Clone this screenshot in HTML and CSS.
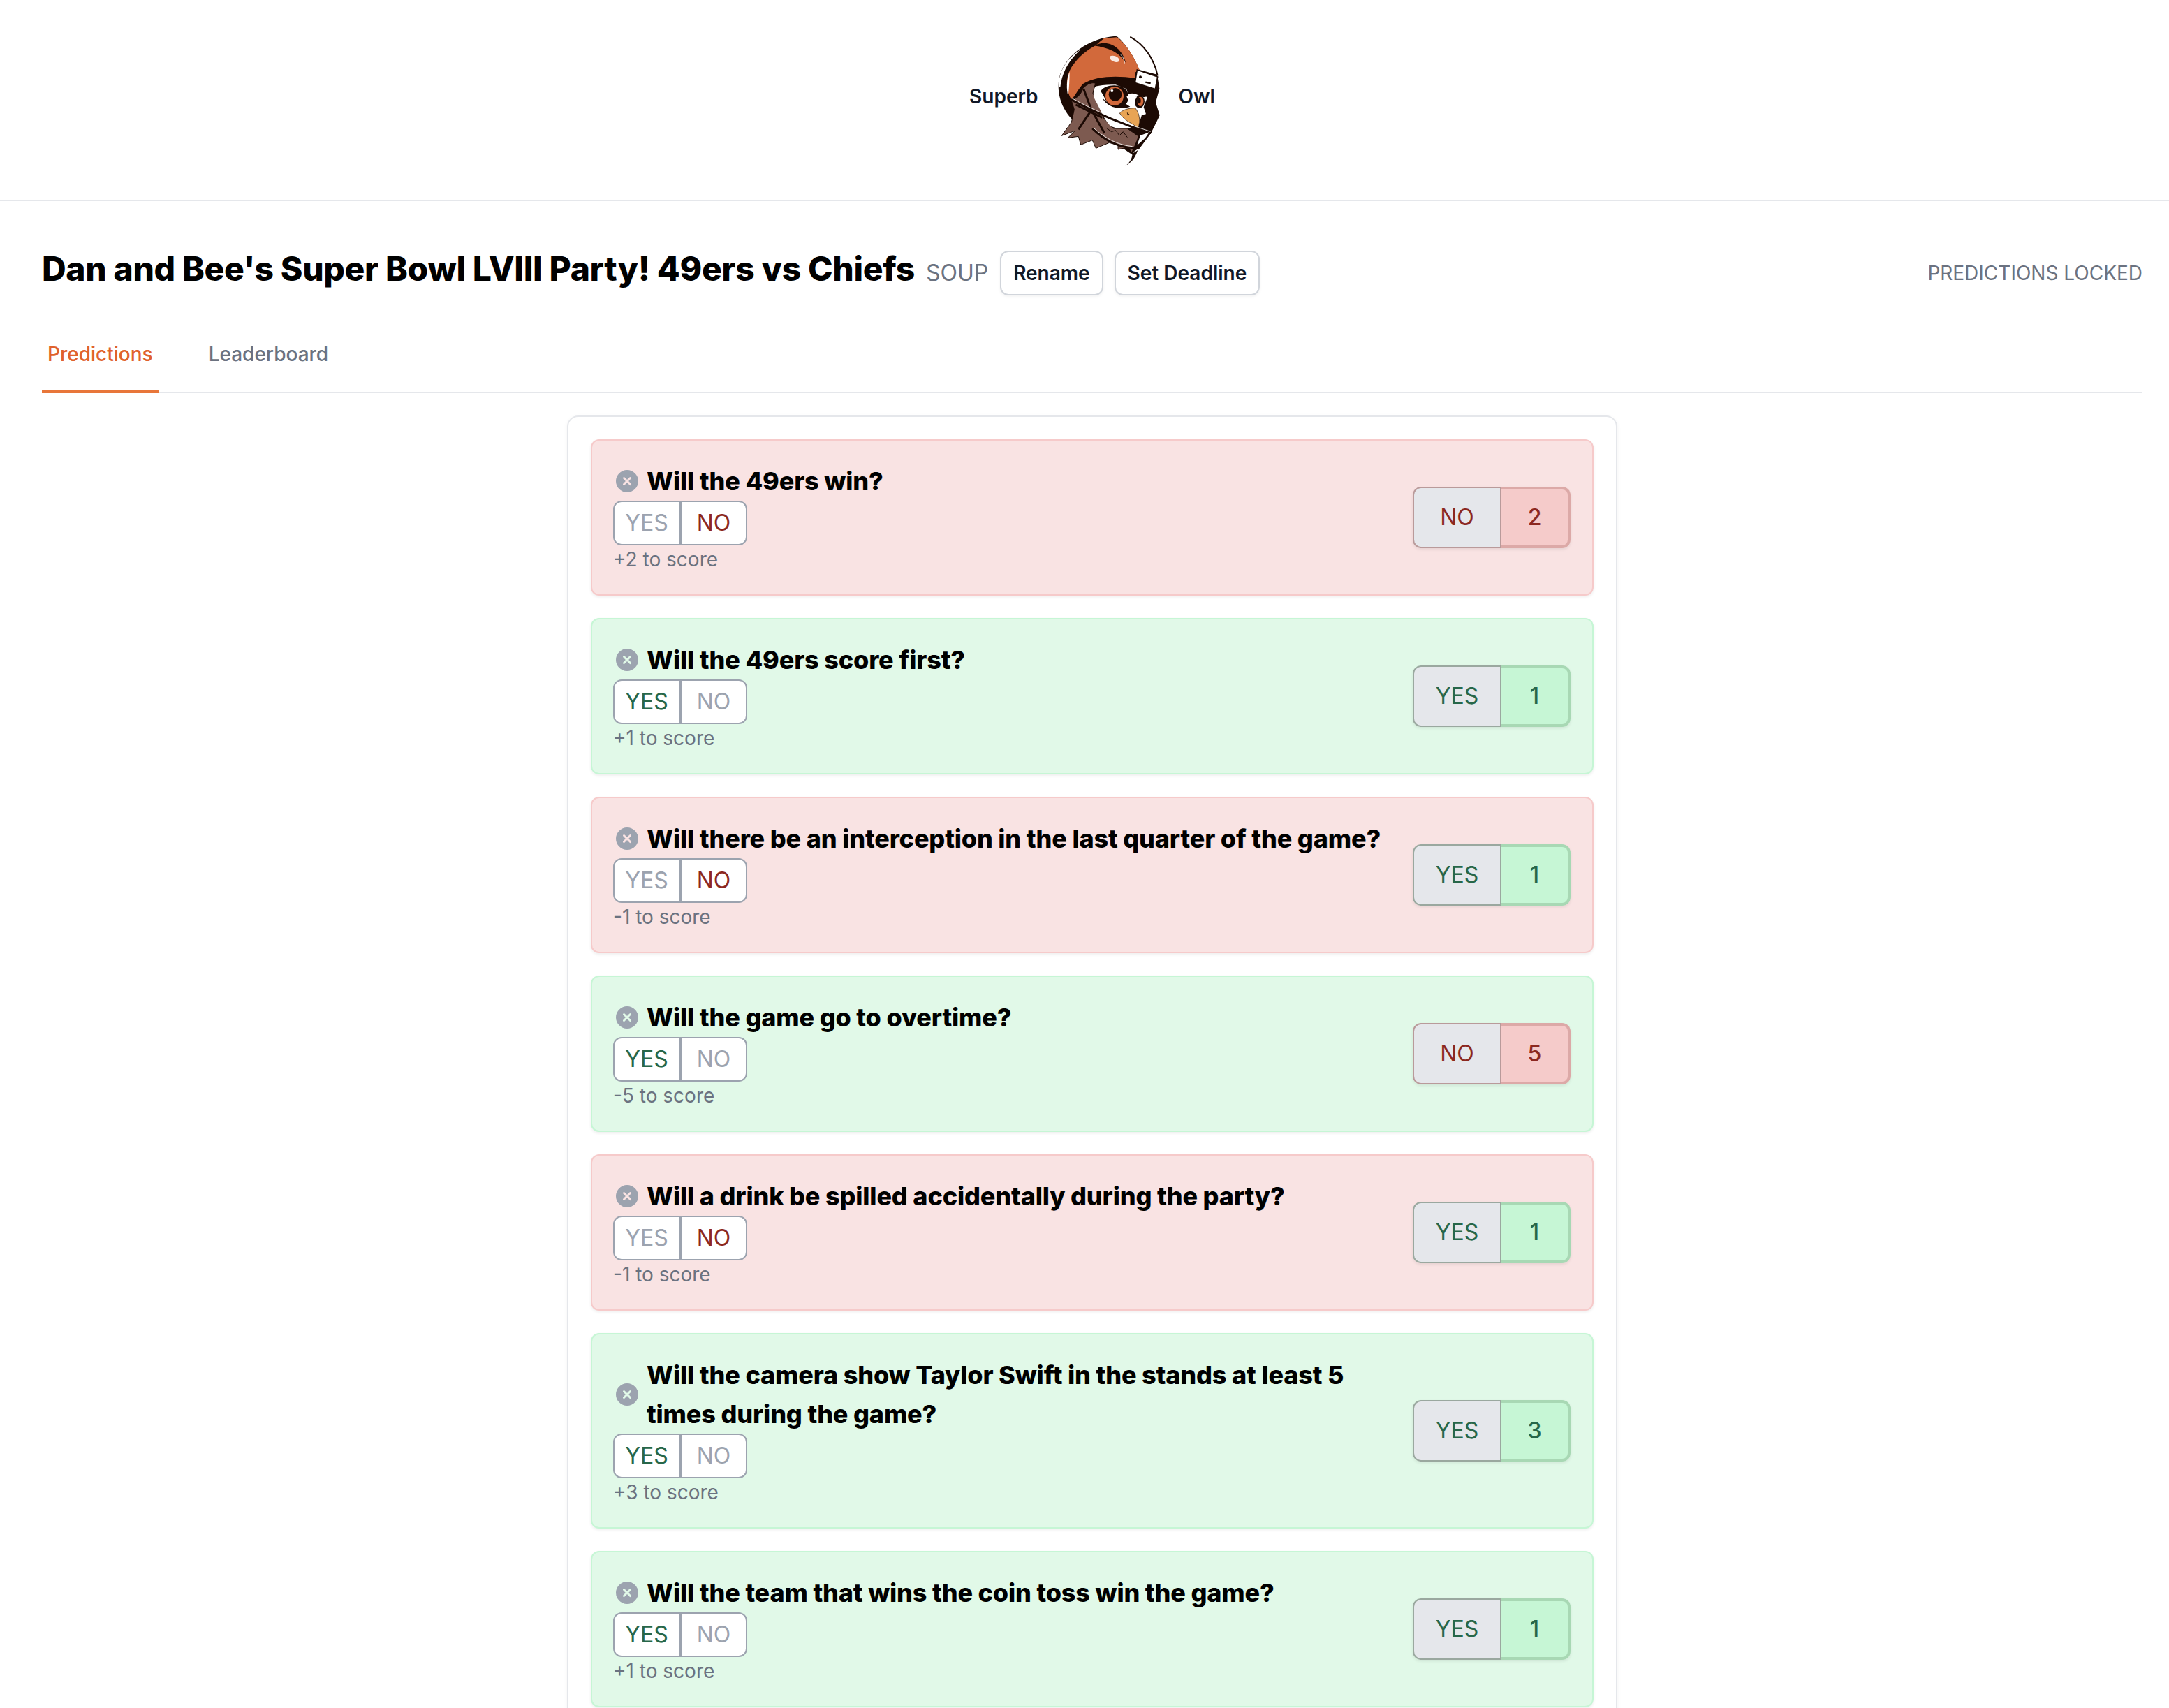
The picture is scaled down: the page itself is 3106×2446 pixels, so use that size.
FILE: index.html
```html
<!DOCTYPE html>
<html lang="en">
<head>
<meta charset="utf-8">
<title>Superb Owl</title>
<link rel="stylesheet" href="styles.css">
</head>
<body>
<svg class="defs" width="0" height="0" aria-hidden="true">
  <symbol id="x-circle" viewBox="2 2 16 16">
    <path fill-rule="evenodd" d="M10 18a8 8 0 100-16 8 8 0 000 16zM8.28 7.22a.75.75 0 00-1.06 1.06L8.94 10l-1.72 1.72a.75.75 0 101.06 1.06L10 11.06l1.72 1.72a.75.75 0 101.06-1.06L11.06 10l1.72-1.72a.75.75 0 00-1.06-1.06L10 8.94 8.28 7.22z"/>
  </symbol>
</svg>
<header class="site-header">
  <span class="brand">Superb</span>
  <svg class="logo" viewBox="0 0 540 630" width="180" height="210" aria-label="Owl in a football helmet">
    <path fill="#1c0a04" d="M290 35C190 40 75 105 47 215C35 285 60 350 105 395L190 430L355 540L385 520L445 445L465 405L479 375L462 320L478 260L468 200L392 180C370 125 335 70 298 38Z"/>
    <path fill="none" stroke="#1c0a04" stroke-width="6" d="M352 38C410 70 455 130 470 205"/>
    <path fill="#fff" d="M45 255C42 190 80 130 140 92C92 135 58 190 52 255Z"/>
    <path fill="#d2693b" d="M240 44L296 40C335 70 370 125 392 180L372 192L372 216C300 204 205 205 150 240C132 258 118 288 100 308C76 268 72 212 102 166C130 122 172 92 205 74C218 62 230 52 240 44Z"/>
    <path fill="#1c0a04" d="M198 76C250 48 314 76 334 150C302 102 258 86 198 76Z"/>
    <path fill="#fff" d="M92 188C79 222 77 260 86 294C90 256 92 222 92 188Z"/>
    <ellipse cx="285" cy="133" rx="22" ry="12" fill="#fff" fill-opacity=".85" transform="rotate(22 285 133)"/>
    <path fill="none" stroke="#fff" stroke-width="2.5" d="M312 115C322 125 328 138 328 152"/>
    <path fill="#7d5a50" stroke="#1c0a04" stroke-width="3" d="M150 258C168 240 190 232 203 238L192 280L220 340L240 390L280 432L340 432L388 465L362 544L345 512L300 522L300 503L262 493L205 517L190 482L140 502L130 466L85 472L115 442L58 463L100 405L112 350L100 312C122 300 140 290 150 258Z"/>
    <path fill="#fff" d="M212 240C194 258 188 285 203 312C225 350 238 392 268 422L298 432L384 432L402 374L420 370L410 340L426 298L380 270L300 240Z"/>
    <path fill="#1c0a04" d="M196 252C230 214 310 212 376 232L436 292L410 298L378 285L344 282L336 262L290 244C255 242 226 246 196 252Z"/>
    <path fill="#1c0a04" d="M226 272C240 240 320 236 340 272C348 295 346 315 334 326L352 338C310 352 255 345 232 300C240 308 246 314 252 318C242 302 238 288 226 272Z"/>
    <ellipse cx="392" cy="316" rx="22" ry="28" fill="#1c0a04"/>
    <path fill="#fff" d="M336 292L352 296L360 280L370 296L382 294L374 310L372 328L358 322L346 328L344 312Z"/>
    <ellipse cx="285" cy="293" rx="39" ry="40" fill="#d2693b"/>
    <circle cx="288" cy="286" r="28" fill="#1c0a04"/>
    <circle cx="274" cy="270" r="6" fill="#fff"/>
    <ellipse cx="396" cy="316" rx="13" ry="20" fill="#d2693b"/>
    <ellipse cx="390" cy="312" rx="8" ry="13" fill="#1c0a04"/>
    <path fill="#e8a455" stroke="#1c0a04" stroke-width="2" d="M307 366C322 350 345 345 374 344C392 366 398 398 386 432C368 410 330 404 307 366Z"/>
    <path fill="#1c0a04" d="M338 362L352 374L342 376Z"/>
    <path fill="none" stroke="#1c0a04" stroke-width="9" d="M98 308C180 352 310 412 442 452M118 330C150 345 190 365 232 385M190 432C240 482 300 512 368 516M152 262L186 352L242 452M186 352L130 436M445 440L385 520M400 455L360 540"/>
    <path fill="none" stroke="#fff" stroke-width="2.5" d="M100 301C180 345 310 405 440 445M198 432C248 476 300 503 362 509"/>
    <path fill="none" stroke="#1c0a04" stroke-width="3" d="M250 430L272 446L290 440L306 462L322 446L340 470"/>
    <path fill="#fff" d="M396 462L434 448L416 474L382 504Z"/>
    <path fill="#1c0a04" d="M362 540C360 565 348 580 332 593C352 580 372 565 385 525Z"/>
    <path fill="#fff" stroke="#1c0a04" stroke-width="5" d="M382 180L470 210L460 263L373 236Z"/>
    <circle cx="396" cy="211" r="6" fill="#1c0a04"/>
    <path fill="none" stroke="#1c0a04" stroke-width="7" d="M418 233L440 238"/>
  </svg>
  <span class="brand">Owl</span>
</header>

<main class="page">
  <div class="title-row">
    <div class="title-group">
      <h1 class="title">Dan and Bee's Super Bowl LVIII Party! 49ers vs Chiefs</h1>
      <span class="code">SOUP</span>
      <button class="btn">Rename</button>
      <button class="btn">Set Deadline</button>
    </div>
    <span class="locked">PREDICTIONS LOCKED</span>
  </div>

  <nav class="tabs">
    <a class="tab tab-active">Predictions</a>
    <a class="tab">Leaderboard</a>
  </nav>

  <section class="panel">
    <article class="card card-red">
      <div class="card-main">
        <div class="question"><svg class="remove"><use href="#x-circle"/></svg><h2 class="q-text">Will the 49ers win?</h2></div>
        <div class="toggle"><span class="opt">YES</span><span class="opt opt-on">NO</span></div>
        <div class="score">+2 to score</div>
      </div>
      <div class="pill pill-red"><span class="pill-answer">NO</span><span class="pill-count">2</span></div>
    </article>

    <article class="card card-green">
      <div class="card-main">
        <div class="question"><svg class="remove"><use href="#x-circle"/></svg><h2 class="q-text">Will the 49ers score first?</h2></div>
        <div class="toggle"><span class="opt opt-on">YES</span><span class="opt">NO</span></div>
        <div class="score">+1 to score</div>
      </div>
      <div class="pill pill-green"><span class="pill-answer">YES</span><span class="pill-count">1</span></div>
    </article>

    <article class="card card-red">
      <div class="card-main">
        <div class="question"><svg class="remove"><use href="#x-circle"/></svg><h2 class="q-text">Will there be an interception in the last quarter of the game?</h2></div>
        <div class="toggle"><span class="opt">YES</span><span class="opt opt-on">NO</span></div>
        <div class="score">-1 to score</div>
      </div>
      <div class="pill pill-green"><span class="pill-answer">YES</span><span class="pill-count">1</span></div>
    </article>

    <article class="card card-green">
      <div class="card-main">
        <div class="question"><svg class="remove"><use href="#x-circle"/></svg><h2 class="q-text">Will the game go to overtime?</h2></div>
        <div class="toggle"><span class="opt opt-on">YES</span><span class="opt">NO</span></div>
        <div class="score">-5 to score</div>
      </div>
      <div class="pill pill-red"><span class="pill-answer">NO</span><span class="pill-count">5</span></div>
    </article>

    <article class="card card-red">
      <div class="card-main">
        <div class="question"><svg class="remove"><use href="#x-circle"/></svg><h2 class="q-text">Will a drink be spilled accidentally during the party?</h2></div>
        <div class="toggle"><span class="opt">YES</span><span class="opt opt-on">NO</span></div>
        <div class="score">-1 to score</div>
      </div>
      <div class="pill pill-green"><span class="pill-answer">YES</span><span class="pill-count">1</span></div>
    </article>

    <article class="card card-green">
      <div class="card-main">
        <div class="question"><svg class="remove"><use href="#x-circle"/></svg><h2 class="q-text">Will the camera show Taylor Swift in the stands at least 5 times during the game?</h2></div>
        <div class="toggle"><span class="opt opt-on">YES</span><span class="opt">NO</span></div>
        <div class="score">+3 to score</div>
      </div>
      <div class="pill pill-green"><span class="pill-answer">YES</span><span class="pill-count">3</span></div>
    </article>

    <article class="card card-green">
      <div class="card-main">
        <div class="question"><svg class="remove"><use href="#x-circle"/></svg><h2 class="q-text">Will the team that wins the coin toss win the game?</h2></div>
        <div class="toggle"><span class="opt opt-on">YES</span><span class="opt">NO</span></div>
        <div class="score">+1 to score</div>
      </div>
      <div class="pill pill-green"><span class="pill-answer">YES</span><span class="pill-count">1</span></div>
    </article>
  </section>
</main>
</body>
</html>
```

FILE: styles.css
```css
* { box-sizing: border-box; }

html, body {
  margin: 0;
  padding: 0;
  height: 2446px;
  overflow: hidden;
  background: #fff;
  font-family: Inter, "Liberation Sans", sans-serif;
  color: #111827;
}

.defs { display: block; height: 0; }

.site-header {
  display: flex;
  justify-content: center;
  align-items: center;
  height: 288px;
  padding: 0 0 10px 22px;
  border-bottom: 2px solid #e5e7eb;
}

.brand {
  font-size: 28px;
  line-height: 40px;
  font-weight: 600;
  color: #111827;
}

.logo {
  flex: none;
  margin: 14px 7px 0 14px;
}

.page { padding: 71px 38px 0 60px; }

.title-row {
  display: flex;
  justify-content: space-between;
  align-items: center;
}

.title-group {
  display: flex;
  align-items: center;
}

.title {
  margin: 0 16px 12px 0;
  font-size: 48px;
  line-height: 52px;
  font-weight: 800;
  letter-spacing: -0.35px;
  color: #000;
}

.code {
  margin-right: 17px;
  font-size: 32px;
  line-height: 40px;
  color: #6b7280;
}

.btn {
  height: 64px;
  margin-right: 16px;
  padding: 0 17px;
  background: #fff;
  border: 2px solid #d1d5db;
  border-radius: 12px;
  box-shadow: 0 2px 4px rgba(0, 0, 0, .05);
  font: 600 28px/40px Inter, "Liberation Sans", sans-serif;
  color: #111827;
}

.locked {
  font-size: 28px;
  line-height: 40px;
  color: #6b7280;
}

.tabs {
  display: flex;
  gap: 64px;
  margin-top: 32px;
  border-bottom: 2px solid #e5e7eb;
}

.tab {
  margin-bottom: -2px;
  padding: 32px 8px 32px;
  border-bottom: 4px solid transparent;
  font-size: 28px;
  line-height: 40px;
  font-weight: 500;
  color: #6b7280;
}

.tab-active {
  color: #e0622c;
  border-bottom-color: #e8763a;
}

.panel {
  display: flex;
  flex-direction: column;
  gap: 32px;
  width: 1504px;
  margin: 32px auto 0;
  padding: 32px;
  background: #fff;
  border: 2px solid #e5e7eb;
  border-radius: 16px;
  box-shadow: 0 2px 6px rgba(0, 0, 0, .05);
}

.card {
  display: flex;
  align-items: center;
  gap: 32px;
  padding: 30px 31px 30px 30px;
  border: 2px solid;
  border-radius: 12px;
  box-shadow: 0 2px 4px rgba(0, 0, 0, .07);
}

.card-red { background: #f9e3e3; border-color: #f6caca; }
.card-green { background: #e1f9e8; border-color: #c6f6d5; }

.card-main { flex: 1; min-width: 0; }

.question {
  display: flex;
  align-items: center;
  gap: 12px;
  margin-left: 4px;
}

.remove {
  flex: none;
  width: 32px;
  height: 32px;
  fill: #9ca3af;
}

.q-text {
  margin: 0;
  font-size: 36px;
  line-height: 56px;
  font-weight: 800;
  letter-spacing: -0.16px;
  color: #000;
}

.toggle {
  display: flex;
  width: 192px;
  height: 64px;
  background: #fff;
  border: 2px solid #9ca3af;
  border-radius: 12px;
}

.opt {
  flex: 1;
  display: flex;
  align-items: center;
  justify-content: center;
  padding-bottom: 1px;
  font-size: 32px;
  color: #9ca3af;
}

.opt + .opt { border-left: 4px solid #9ca3af; }

.card-red .opt-on { color: #8c2820; }
.card-green .opt-on { color: #276749; }

.score {
  font-size: 28px;
  line-height: 40px;
  color: #6b7280;
}

.pill {
  flex: none;
  display: flex;
  height: 88px;
  font-size: 32px;
  border-radius: 12px;
  box-shadow: 0 2px 4px rgba(0, 0, 0, .08);
}

.pill-answer,
.pill-count {
  display: flex;
  align-items: center;
  justify-content: center;
  padding-bottom: 2px;
}

.pill-answer {
  width: 127px;
  background: #e5e7eb;
  border: 2px solid;
  border-radius: 12px 0 0 12px;
}

.pill-count {
  width: 99px;
  border: 4px solid;
  border-left: 0;
  border-radius: 0 12px 12px 0;
  font-weight: 500;
}

.pill-red { color: #8c2820; }
.pill-red .pill-answer { border-color: #b99a9a; }
.pill-red .pill-count { background: #f5cbca; border-color: #dca9a7; }

.pill-green { color: #276749; }
.pill-green .pill-answer { border-color: #9aa89f; }
.pill-green .pill-count { background: #c6f6d5; border-color: #a8d8b4; }
```
